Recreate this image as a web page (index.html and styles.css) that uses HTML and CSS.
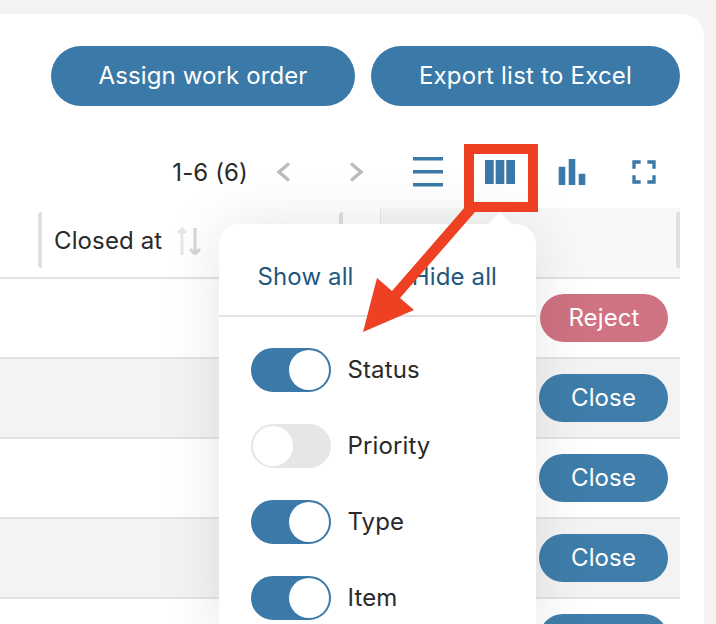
FILE: index.html
```
<!DOCTYPE html>
<html lang="en">
<head>
<meta charset="utf-8">
<title>Work orders</title>
<link rel="stylesheet" href="styles.css">
</head>
<body>
<main class="card">
  <div class="actions">
    <button class="pill">Assign work order</button>
    <button class="pill pill-export">Export list to Excel</button>
  </div>
  <div class="toolbar">
    <span class="count">1-6 (6)</span>
    <span class="tool"><svg width="72" height="72" viewBox="0 0 72 72"><path class="chev" d="M41 27.500 31 36l10 8.500"/></svg></span>
    <span class="tool"><svg width="72" height="72" viewBox="0 0 72 72"><path class="chev" d="M31 27.500 41 36l-10 8.500"/></svg></span>
    <span class="tool"><svg width="72" height="72" viewBox="0 0 72 72"><path class="ico" d="M21 21h30v3.500H21zM21 34h30v3.500H21zM21 47h30v3.500H21z"/></svg></span>
    <span class="tool"><svg width="72" height="72" viewBox="0 0 72 72"><path class="ico" d="M21 24h8.700v24H21zM31.700 24h8.600v24h-8.600zM42.300 24H51v24h-8.700z"/></svg></span>
    <span class="tool"><svg width="72" height="72" viewBox="0 0 72 72"><path class="ico" d="M22.700 30.700h6.600V49h-6.600zM32.700 23h6.600v26h-6.600zM42.700 37.700h6.600V49h-6.600z"/></svg></span>
    <span class="tool"><svg width="72" height="72" viewBox="0 0 72 72"><g transform="translate(16 16) scale(1.667)"><path class="ico" d="M7 14H5v5h5v-2H7v-3zm-2-4h2V7h3V5H5v5zm12 7h-3v2h5v-5h-2v3zM14 5v2h3v3h2V5h-5z"/></g></svg></span>
  </div>
  <div class="table">
    <div class="head">
      <div class="head-gap"></div>
      <div class="head-cell head-closed">
        <span>Closed at</span>
        <svg class="sort" width="26" height="30" viewBox="0 0 26 30"><path class="sort-up" d="M5 30V4M1 8l4-4 4 4"/><path class="sort-down" d="M18 3v26M13 24l5 5 5-5"/></svg>
      </div>
      <div class="head-cell head-narrow"></div>
      <div class="head-fixed"></div>
    </div>
    <div class="row"><button class="row-btn row-reject">Reject</button></div>
    <div class="row row-alt"><button class="row-btn">Close</button></div>
    <div class="row"><button class="row-btn">Close</button></div>
    <div class="row row-alt"><button class="row-btn">Close</button></div>
    <div class="row"><button class="row-btn">Close</button></div>

    <div class="popup">
      <div class="popup-tip"></div>
      <div class="popup-head">
        <span>Show all</span>
        <span>Hide all</span>
      </div>
      <div class="popup-list">
        <div class="opt"><span class="toggle toggle-on"><span class="knob"></span></span>Status</div>
        <div class="opt"><span class="toggle"><span class="knob"></span></span>Priority</div>
        <div class="opt"><span class="toggle toggle-on"><span class="knob"></span></span>Type</div>
        <div class="opt"><span class="toggle toggle-on"><span class="knob"></span></span>Item</div>
      </div>
    </div>
  </div>
</main>
<div class="mark-box"></div>
<svg class="mark-arrow" width="716" height="624" viewBox="0 0 716 624"><polygon points="465,207 392,291 377,278 363,332 414,310 400,298 475,212"/></svg>
</body>
</html>
```
FILE: styles.css
```
* { box-sizing: border-box; }
html, body { margin: 0; height: 624px; overflow: hidden; }
body {
  background: #f3f3f3;
  font-family: Inter, "Liberation Sans", sans-serif;
  font-size: 24px;
  letter-spacing: .12px;
  color: #2a2a2a;
  position: relative;
}
button { font: inherit; letter-spacing: inherit; border: 0; padding: 0 0 2px; color: #fff; }

.card {
  width: 704px;
  height: 610px;
  margin-top: 14px;
  padding: 32px 24px 0 0;
  background: #fff;
  border-top-right-radius: 22px;
  overflow: hidden;
}
.actions { display: flex; justify-content: flex-end; gap: 16px; }
.pill {
  width: 304px;
  height: 60px;
  border-radius: 30px;
  background: #3b7aa8;
}
.pill-export { width: 309px; letter-spacing: .22px; }

.toolbar {
  display: flex;
  justify-content: flex-end;
  align-items: center;
  height: 72px;
  margin-top: 30px;
}
.tool { display: block; width: 72px; height: 72px; }
.tool svg { display: block; }
.ico { fill: #3b7aa8; }
.chev { fill: none; stroke: #bdbdbd; stroke-width: 3.500; }

.table { position: relative; width: 680px; }
.head { display: flex; height: 71px; border-bottom: 2px solid #e2e2e2; }
.head-gap { width: 38px; }
.head-cell {
  display: flex;
  align-items: center;
  height: 56px;
  margin-top: 4px;
  border-left: 4px solid #e0e0e0;
  border-radius: 3px 0 0 3px;
}
.head-closed { width: 301px; padding-left: 12px; gap: 15px; }
.head-narrow { width: 41px; }
.sort-up { fill: none; stroke: #e6e6e6; stroke-width: 3; }
.sort-down { fill: none; stroke: #d6d6d6; stroke-width: 3; }
.head-fixed {
  flex: 1;
  height: 69px;
  background: #f7f8f8;
  position: relative;
  border-left: 1px solid #e8e8e8;
}
.head-fixed::after {
  content: "";
  position: absolute;
  right: 0;
  top: 4px;
  width: 4px;
  height: 56px;
  background: #e0e0e0;
  border-radius: 3px 0 0 3px;
}

.row {
  display: flex;
  justify-content: flex-end;
  align-items: flex-start;
  height: 80px;
  padding: 15px 12px 0 0;
  border-bottom: 2px solid #e2e2e2;
}
.row-alt { background: #f3f3f3; }
.row-btn {
  width: 129px;
  height: 48px;
  border-radius: 24px;
  background: #3f7daa;
}
.row-reject { width: 128px; background: #cf7282; }

.popup {
  position: absolute;
  left: 219px;
  top: 16px;
  width: 317px;
  height: 420px;
  background: #fff;
  border-radius: 20px 20px 0 0;
  box-shadow: 0 0 60px rgba(0, 0, 0, .1);
}
.popup-tip {
  position: absolute;
  left: 272px;
  top: -8px;
  width: 18px;
  height: 18px;
  background: #fff;
  transform: rotate(45deg);
}
.popup-head {
  position: relative;
  display: flex;
  justify-content: space-between;
  align-items: center;
  height: 93px;
  padding: 14px 39px 0 38.500px;
  border-bottom: 2px solid #e2e2e2;
  color: #22577f;
}
.popup-list {
  display: flex;
  flex-direction: column;
  gap: 32px;
  padding: 31px 32px 0;
}
.opt { display: flex; align-items: flex-start; gap: 16.500px; height: 44px; line-height: 44px; }
.toggle {
  display: block;
  flex: none;
  width: 80px;
  height: 44px;
  border: 2px solid #e6e6e6;
  border-radius: 22px;
  background: #e6e6e6;
}
.toggle-on { background: #3b7aa8; border-color: #3b7aa8; }
.knob { display: block; width: 40px; height: 40px; border-radius: 50%; background: #fff; }
.toggle-on .knob { margin-left: 36px; }

.mark-box {
  position: absolute;
  left: 464px;
  top: 144px;
  width: 74px;
  height: 68px;
  border: 10px solid #ee4023;
}
.mark-arrow { position: absolute; left: 0; top: 0; }
.mark-arrow polygon { fill: #ee4023; }
```
